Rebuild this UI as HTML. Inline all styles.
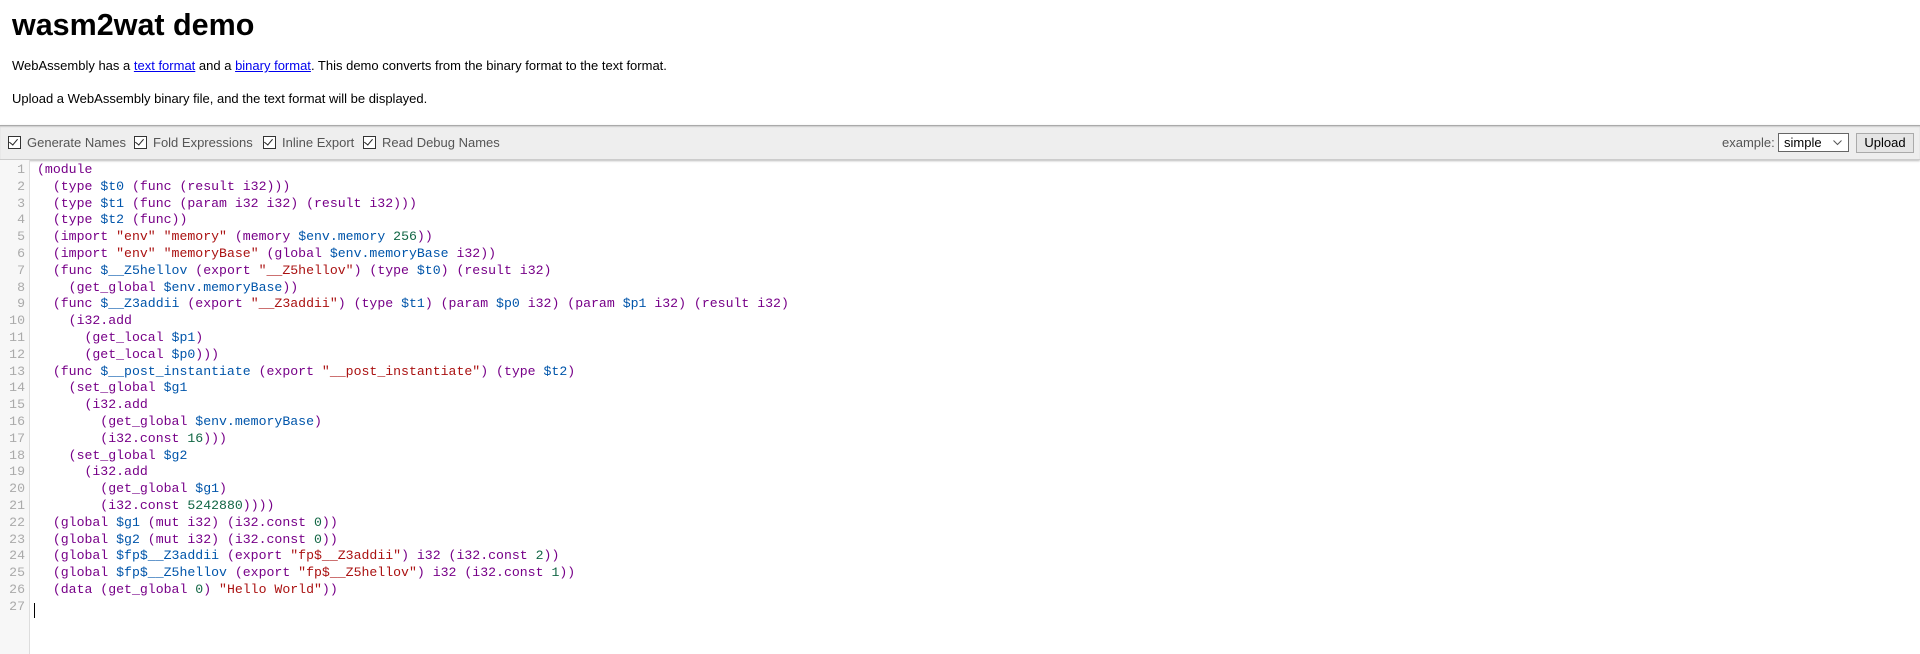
<!DOCTYPE html>
<html><head><meta charset="utf-8"><style>
body{margin:0;background:#fff;font-family:"Liberation Sans",Arial,sans-serif;width:1920px;height:654px;overflow:hidden;position:relative}
h1{position:absolute;left:12px;top:7px;margin:0;font-size:30.5px;font-weight:bold;line-height:36px}
p{position:absolute;left:12px;margin:0;font-size:13px;line-height:16px}
a{color:#00e}
.tb{position:absolute;left:0;top:125px;width:1920px;height:33px;background:#eee;border-top:1px solid #aaa;border-bottom:1px solid #ccc;box-shadow:0 1px 2px #bbb, inset 0 1px 1px #ccc;font-size:13px;color:#555}
.tb .it{position:absolute;top:9px;line-height:16px}
.cb{display:inline-block;width:11px;height:11px;border:1px solid #333;background:#fff;vertical-align:-2px;margin-right:6px;position:relative}
.cb:after{content:"";position:absolute;left:2px;top:0px;width:4px;height:7px;border:solid #222;border-width:0 1.5px 1.5px 0;transform:rotate(40deg)}
.sel{position:absolute;left:1778px;top:7px;width:71px;height:19px;border:1px solid #666;background:#fff;color:#000;font-size:13px;line-height:17px;box-sizing:border-box;padding-left:5px}
.sel svg{position:absolute;right:6px;top:6px}
.btn{position:absolute;left:1856px;top:7px;width:58px;height:20px;border:1px solid #aaa;background:#e5e5e5;color:#000;font-size:13px;line-height:18px;text-align:center;box-sizing:border-box}
.gut{position:absolute;left:0;top:160px;width:29px;height:494px;background:#f7f7f7;border-right:1px solid #ddd}
.code{position:absolute;left:0;top:162px;font-family:"Liberation Mono","Courier New",monospace;font-size:13.2px;line-height:16.8px;white-space:pre}
.ln{position:absolute;left:0;width:25px;text-align:right;color:#aaa}
.tx{position:absolute;left:37px;color:#708}
.v{color:#05a}.s{color:#a11}.n{color:#164}
.cur{position:absolute;left:34px;top:603px;width:1px;height:15px;background:#000}
</style></head><body>
<h1>wasm2wat demo</h1>
<p style="top:58px">WebAssembly has a <a href="#">text format</a> and a <a href="#">binary format</a>. This demo converts from the binary format to the text format.</p>
<p style="top:91px">Upload a WebAssembly binary file, and the text format will be displayed.</p>
<div class="tb">
<span class="it" style="left:8px"><span class="cb"></span>Generate Names</span>
<span class="it" style="left:134px"><span class="cb"></span>Fold Expressions</span>
<span class="it" style="left:263px"><span class="cb"></span>Inline Export</span>
<span class="it" style="left:363px"><span class="cb"></span>Read Debug Names</span>
<span class="it" style="left:1722px">example:</span>
<div class="sel">simple<svg width="9" height="6" viewBox="0 0 9 6"><path d="M0.5 0.5L4.5 4.5L8.5 0.5" stroke="#555" fill="none"/></svg></div>
<div class="btn">Upload</div>
</div>
<div class="gut"></div>
<div class="code">
<div class="ln" style="top:0">1
2
3
4
5
6
7
8
9
10
11
12
13
14
15
16
17
18
19
20
21
22
23
24
25
26
27</div>
<div class="tx" style="top:0">(module
  (type <span class="v">$t0</span> (func (result i32)))
  (type <span class="v">$t1</span> (func (param i32 i32) (result i32)))
  (type <span class="v">$t2</span> (func))
  (import <span class="s">"env"</span> <span class="s">"memory"</span> (memory <span class="v">$env.memory</span> <span class="n">256</span>))
  (import <span class="s">"env"</span> <span class="s">"memoryBase"</span> (global <span class="v">$env.memoryBase</span> i32))
  (func <span class="v">$__Z5hellov</span> (export <span class="s">"__Z5hellov"</span>) (type <span class="v">$t0</span>) (result i32)
    (get_global <span class="v">$env.memoryBase</span>))
  (func <span class="v">$__Z3addii</span> (export <span class="s">"__Z3addii"</span>) (type <span class="v">$t1</span>) (param <span class="v">$p0</span> i32) (param <span class="v">$p1</span> i32) (result i32)
    (i32.add
      (get_local <span class="v">$p1</span>)
      (get_local <span class="v">$p0</span>)))
  (func <span class="v">$__post_instantiate</span> (export <span class="s">"__post_instantiate"</span>) (type <span class="v">$t2</span>)
    (set_global <span class="v">$g1</span>
      (i32.add
        (get_global <span class="v">$env.memoryBase</span>)
        (i32.const <span class="n">16</span>)))
    (set_global <span class="v">$g2</span>
      (i32.add
        (get_global <span class="v">$g1</span>)
        (i32.const <span class="n">5242880</span>))))
  (global <span class="v">$g1</span> (mut i32) (i32.const <span class="n">0</span>))
  (global <span class="v">$g2</span> (mut i32) (i32.const <span class="n">0</span>))
  (global <span class="v">$fp$__Z3addii</span> (export <span class="s">"fp$__Z3addii"</span>) i32 (i32.const <span class="n">2</span>))
  (global <span class="v">$fp$__Z5hellov</span> (export <span class="s">"fp$__Z5hellov"</span>) i32 (i32.const <span class="n">1</span>))
  (data (get_global <span class="n">0</span>) <span class="s">"Hello World"</span>))
</div>
</div>
<div class="cur"></div>
</body></html>
